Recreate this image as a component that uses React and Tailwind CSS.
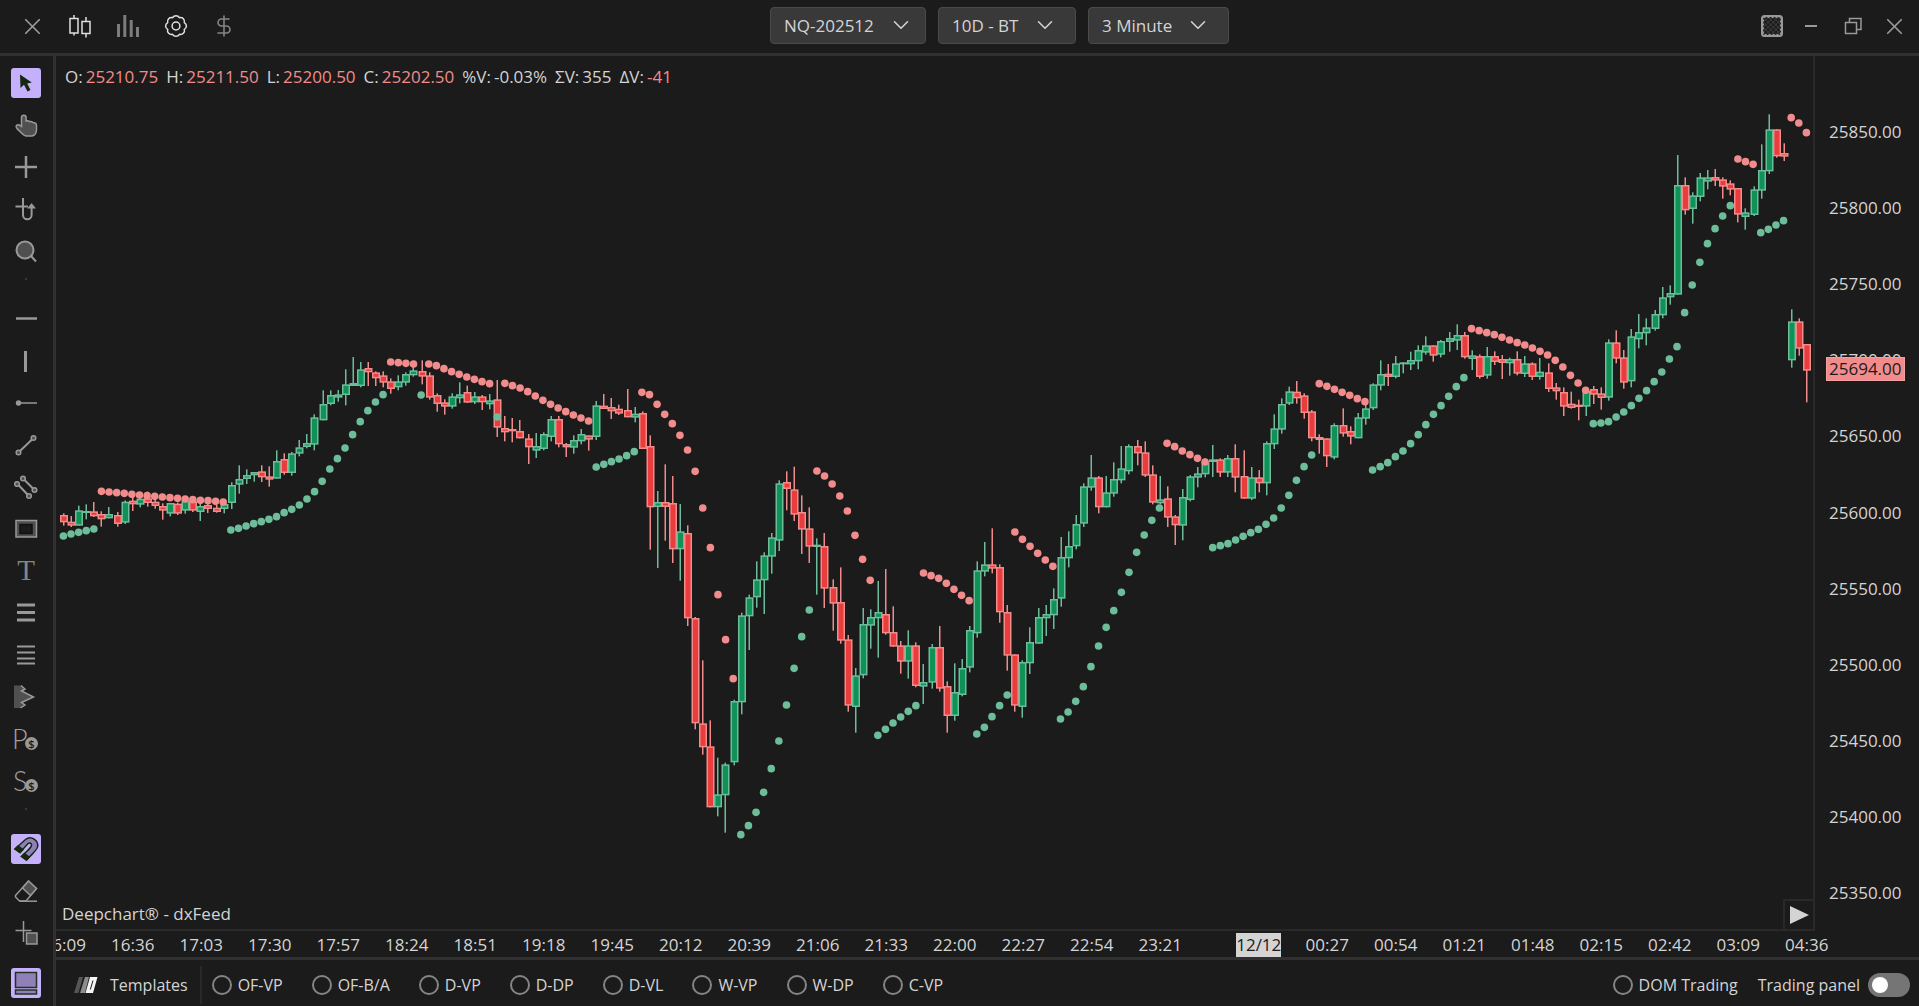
import React from "react";
import { ChevronDown, DollarSign, X } from "lucide-react";

/* ---------- price series ---------- */

// Each block: [baseline, rows]; a row is [direction, high, bodyTop, bodyBottom, low], in thirds of a unit below the baseline.
const CANDLE_BLOCKS = [
  [340, [
    ["D", 520, 525, 547, 557], ["D", 528, 545, 557, 561], ["U", 497, 511, 557, 557], ["U", 493, 513, 519, 538],
    ["D", 486, 514, 529, 531], ["D", 514, 522, 538, 560], ["U", 501, 522, 535, 535], ["D", 516, 525, 552, 560],
    ["U", 481, 485, 548, 552], ["D", 470, 482, 493, 513], ["U", 468, 476, 494, 502], ["D", 455, 475, 489, 500],
    ["D", 478, 485, 498, 506], ["D", 490, 498, 512, 539], ["U", 489, 489, 521, 529], ["D", 488, 491, 521, 525],
    ["U", 480, 482, 512, 521], ["D", 480, 484, 512, 516], ["U", 490, 498, 516, 543], ["D", 490, 495, 507, 519],
    ["D", 495, 503, 516, 518], ["U", 490, 492, 507, 520], ["U", 427, 435, 489, 507], ["U", 376, 417, 434, 461],
    ["U", 388, 405, 417, 432], ["U", 396, 396, 406, 425], ["D", 376, 394, 412, 426], ["D", 379, 409, 419, 440],
    ["U", 331, 363, 416, 416], ["D", 340, 357, 399, 404], ["U", 336, 340, 399, 407], ["U", 300, 322, 341, 349],
    ["U", 282, 309, 321, 325], ["U", 223, 232, 314, 331], ["U", 151, 192, 241, 241], ["U", 151, 165, 192, 196],
    ["U", 150, 163, 173, 185], ["U", 88, 133, 165, 196], ["U", 51, 129, 138, 138], ["U", 66, 88, 138, 142],
    ["D", 66, 84, 97, 138], ["D", 94, 97, 115, 138], ["D", 94, 106, 128, 142], ["D", 115, 124, 147, 161],
    ["U", 106, 124, 142, 151], ["U", 97, 102, 128, 137], ["U", 79, 91, 106, 110], ["D", 61, 93, 110, 133],
    ["D", 97, 106, 173, 179], ["D", 160, 165, 192, 215], ["D", 178, 187, 200, 224], ["U", 160, 169, 200, 206],
    ["U", 127, 163, 175, 190], ["D", 137, 156, 188, 188], ["U", 156, 169, 187, 192], ["D", 165, 169, 187, 210],
    ["U", 162, 181, 193, 208], ["D", 120, 178, 263, 291], ["D", 228, 264, 277, 304], ["D", 234, 267, 274, 307],
    ["D", 240, 273, 295, 295], ["D", 282, 295, 322, 372], ["U", 279, 318, 332, 354], ["U", 277, 282, 327, 331],
    ["U", 228, 237, 291, 304], ["D", 228, 237, 313, 322], ["D", 309, 312, 322, 351], ["U", 286, 300, 323, 341],
    ["U", 267, 282, 304, 313], ["D", 286, 286, 299, 332], ["U", 183, 196, 291, 300], ["D", 162, 197, 207, 207],
    ["D", 174, 201, 214, 237], ["D", 194, 206, 221, 225], ["D", 147, 210, 232, 232], ["U", 201, 221, 233, 247],
    ["D", 214, 219, 327, 327], ["D", 286, 318, 502, 629], ["U", 453, 486, 501, 684], ["D", 373, 486, 501, 602],
    ["D", 408, 489, 628, 669], ["U", 492, 574, 628, 722], ["D", 556, 579, 835, 858],
  ]],
  [500, [
    ["D", 351, 354, 670, 688], ["D", 481, 670, 742, 764], ["D", 661, 739, 922, 922], ["U", 773, 883, 922, 949],
    ["U", 788, 793, 886, 998], ["U", 599, 603, 787, 796], ["U", 338, 346, 607, 643], ["U", 284, 292, 349, 450],
    ["U", 184, 238, 292, 323], ["U", 157, 166, 241, 342], ["U", 99, 112, 170, 221], ["U", -59, -50, 122, 153],
    ["D", -86, -54, -33, 31], ["D", -100, -32, 44, 63],
  ]],
  [440, [
    ["D", 166, 216, 269, 342], ["D", 202, 265, 320, 369], ["U", 295, 314, 321, 464], ["D", 279, 318, 446, 504],
    ["D", 418, 441, 491, 572], ["D", 382, 486, 602, 611], ["D", 585, 598, 797, 815], ["U", 684, 706, 801, 878],
    ["U", 504, 552, 706, 715], ["U", 508, 531, 557, 626], ["U", 423, 516, 535, 653], ["D", 387, 522, 580, 584],
    ["D", 499, 576, 620, 620], ["D", 603, 616, 665, 701], ["U", 571, 616, 665, 716], ["D", 607, 616, 738, 742],
    ["U", 672, 726, 740, 792], ["U", 612, 621, 728, 746], ["D", 558, 621, 746, 755], ["D", 724, 738, 828, 878],
    ["U", 670, 756, 828, 842], ["U", 657, 684, 765, 769], ["U", 558, 570, 683, 697], ["U", 364, 391, 580, 593],
    ["U", 306, 373, 395, 409], ["D", 265, 373, 386, 400], ["D", 373, 381, 517, 548], ["D", 495, 516, 647, 692],
    ["D", 643, 643, 797, 815], ["U", 661, 666, 801, 833], ["U", 562, 606, 670, 702], ["U", 504, 531, 611, 611],
    ["U", 495, 522, 535, 588], ["U", 445, 477, 526, 567], ["U", 291, 351, 476, 500], ["U", 274, 318, 355, 382],
    ["U", 225, 252, 319, 328], ["U", 130, 139, 251, 261], ["U", 45, 112, 143, 152], ["D", 108, 112, 202, 220],
    ["U", 108, 157, 202, 202], ["U", 67, 117, 161, 170], ["U", 18, 85, 121, 130], ["U", 13, 18, 94, 103],
    ["D", 0, 18, 40, 76], ["D", 4, 37, 107, 111], ["D", 76, 103, 188, 193], ["U", 108, 178, 190, 193],
    ["D", 139, 175, 233, 261], ["D", 225, 229, 256, 315],
  ]],
  [400, [
    ["U", 267, 291, 377, 421], ["U", 225, 229, 300, 304], ["U", 201, 220, 233, 262], ["U", 175, 187, 223, 232],
    ["U", 135, 178, 186, 231], ["D", 175, 178, 218, 231], ["U", 165, 174, 218, 231], ["D", 133, 174, 233, 277],
    ["D", 151, 228, 296, 296], ["U", 201, 232, 296, 300], ["D", 210, 232, 250, 277], ["U", 124, 129, 250, 286],
    ["U", 43, 85, 133, 147], ["U", -5, 12, 89, 101], ["U", -40, -26, 11, 15], ["D", -57, -25, -5, 11],
    ["D", -20, -14, 39, 56], ["D", 30, 34, 115, 124], ["D", 103, 111, 120, 161], ["D", 115, 115, 169, 201],
    ["U", 70, 75, 173, 178], ["D", 25, 75, 101, 110], ["D", 79, 93, 110, 133], ["U", 39, 52, 115, 115],
    ["U", 15, 25, 56, 74], ["U", -50, -47, 25, 30],
  ]],
  [300, [
    ["U", 181, 222, 257, 271], ["D", 192, 221, 231, 258], ["U", 168, 190, 231, 235], ["U", 187, 187, 193, 220],
    ["U", 155, 180, 193, 210], ["U", 136, 150, 184, 208], ["U", 109, 136, 158, 164], ["D", 136, 136, 167, 185],
    ["U", 120, 123, 164, 172], ["U", 96, 114, 126, 155], ["U", 73, 105, 122, 150], ["D", 96, 105, 172, 176],
    ["U", 151, 166, 177, 210], ["D", 163, 168, 231, 236], ["U", 141, 168, 227, 236], ["D", 154, 168, 186, 195],
    ["D", 165, 177, 189, 237], ["U", 173, 177, 190, 227], ["D", 154, 177, 221, 226], ["U", 168, 190, 222, 231],
    ["D", 187, 190, 231, 240], ["U", 174, 215, 231, 239], ["D", 190, 217, 267, 276], ["D", 249, 262, 274, 299],
    ["D", 262, 276, 320, 348], ["D", 275, 311, 324, 326], ["D", 299, 314, 321, 361], ["U", 270, 273, 320, 348],
    ["D", 258, 267, 284, 312], ["D", 262, 280, 294, 329], ["U", 118, 127, 293, 302], ["D", 91, 127, 176, 190],
    ["D", 150, 172, 248, 266], ["U", 87, 109, 244, 262], ["U", 42, 96, 118, 145], ["U", 55, 82, 100, 136],
    ["U", 30, 42, 87, 92],
  ]],
  [0, [
    ["U", 861, 892, 946, 955], ["U", 856, 879, 892, 914], ["U", 465, 555, 884, 884], ["D", 532, 555, 631, 644],
    ["U", 577, 586, 627, 671], ["U", 519, 532, 591, 604], ["U", 510, 532, 545, 568], ["D", 507, 531, 542, 558],
    ["D", 532, 538, 560, 596], ["D", 541, 550, 569, 586], ["D", 564, 564, 644, 667], ["U", 625, 637, 651, 689],
    ["U", 559, 568, 645, 648], ["U", 433, 510, 572, 596], ["U", 343, 388, 514, 522], ["D", 388, 388, 469, 473],
    ["D", 430, 459, 470, 483], ["U", 928, 964, 1081, 1103], ["D", 955, 964, 1046, 1067], ["D", 1032, 1032, 1112, 1207],
  ]],
];

const CANDLES = CANDLE_BLOCKS.flatMap(([base, rows]) =>
  rows.map(([dir, ...ys]) => [dir, ...ys.map((y) => base + y / 3)])
);

// Trailing-stop dots: [direction, first candle, baseline, offsets in thirds].
const STOP_RUNS = [
  ["U", 0, 340, [588, 582, 577, 572, 567]],
  ["D", 5, 340, [454, 456, 458, 460, 463, 465, 467, 469, 471, 473, 475, 477, 479, 481, 482, 484, 486]],
  ["U", 22, 340, [570, 565, 558, 551, 545, 538, 530, 518, 508, 495, 477, 455, 424, 387, 356, 324, 284, 245, 212, 186, 164]],
  ["D", 43, 340, [66, 68, 70, 72]],
  ["U", 47, 340, [165]],
  ["D", 48, 340, [72, 77, 86, 95, 103, 111, 118, 125, 131]],
  ["U", 57, 340, [231]],
  ["D", 58, 340, [130, 137, 144, 155, 168, 181, 193, 204, 215, 225, 234, 243]],
  ["U", 70, 340, [381, 373, 365, 357, 347, 335]],
  ["D", 76, 340, [157, 164, 193, 223, 251, 286, 330, 394, 504, 623, 764, 899, 1016]],
  ["U", 89, 500, [1004, 977, 937, 877, 806, 723, 615, 505, 410, 330]],
  ["D", 99, 440, [93, 108, 132, 168, 213, 286, 358, 421]],
  ["U", 107, 440, [886, 868, 849, 831, 814, 797]],
  ["D", 113, 440, [399, 407, 415, 430, 448, 466, 482]],
  ["U", 120, 440, [882, 862, 830, 797, 765]],
  ["D", 125, 440, [276, 298, 319, 340, 360, 379]],
  ["U", 131, 440, [837, 816, 784, 740, 680, 618, 562, 512, 457, 397, 337, 285, 241, 204]],
  ["D", 145, 400, [130, 140, 153, 164, 175, 186]],
  ["U", 151, 400, [443, 437, 431, 420, 409, 398, 388, 373, 354, 324, 286, 241, 200, 165]],
  ["D", 165, 300, [251, 259, 268, 277, 286, 296, 305]],
  ["U", 172, 300, [510, 500, 488, 470, 453, 431, 404, 374, 343, 317, 289, 260, 233]],
  ["D", 185, 300, [86, 92, 98, 104, 112, 120, 128, 135, 144, 154, 165, 181, 201, 226, 249, 271]],
  ["U", 201, 300, [371, 369, 365, 351, 336, 317, 295, 272, 245, 216, 177, 140]],
  ["U", 213, 0, [938, 855, 787, 731, 686, 648, 617]],
  ["D", 220, 0, [477, 485, 493]],
  ["U", 223, 0, [698, 688, 675, 662]],
  ["D", 227, 0, [353, 369, 398]],
];

const EDGE = { U: "#6dbd9b", D: "#f28b8b" };
const BODY = { U: "#0f9158", D: "#e93c3c" };

const candleLeft = (i) => 1.5 * Math.floor(40.53 + 5.0743 * i);
const dotX = (i) => 63.4 + 7.6114 * i;

function PriceChart() {
  return (
    <svg
      className="block h-full w-full"
      viewBox="56 56 1757 873"
      preserveAspectRatio="none"
      role="img"
      aria-label="NQ-202512 three minute candles"
    >
      {CANDLES.map(([dir, high, top, bottom, low], i) => {
        const x = candleLeft(i);
        const inner = bottom - top - 3;
        return (
          <g key={i}>
            <rect x={x + 3} y={high} width="1.5" height={low - high} fill={EDGE[dir]} />
            <rect x={x} y={top} width="8" height={bottom - top} fill={EDGE[dir]} />
            {inner > 0 && <rect x={x + 1.5} y={top + 1.5} width="5" height={inner} fill={BODY[dir]} />}
          </g>
        );
      })}
      {STOP_RUNS.flatMap(([dir, start, base, ys]) =>
        ys.map((y, k) => (
          <circle key={`${start}-${k}`} cx={dotX(start + k)} cy={base + y / 3} r="3.8" fill={EDGE[dir]} />
        ))
      )}
    </svg>
  );
}

/* ---------- icons ---------- */

const G = "#999999";
const F = "#505050";
const INK = "#16290f";

function Icon({ children }) {
  return (
    <svg className="h-[30px] w-[30px] overflow-visible" viewBox="0 0 30 30" fill="none" stroke={G} strokeWidth="1.5" aria-hidden="true">
      {children}
    </svg>
  );
}

const CoinBadge = () => (
  <>
    <circle cx="20.500" cy="19.500" r="6.500" fill={G} stroke="none" />
    <text x="20.500" y="23.500" textAnchor="middle" fontSize="11" fontWeight="600" fill="#1b1b1b" stroke="none">$</text>
  </>
);

const TOOLS = [
  ["Select", <path d="M9 6.500L9.500 20L13 16.800L16.500 23.500L19.500 22L16.200 15.500L20.800 14.500Z" fill={INK} stroke="none" />, true],
  ["Pan", <path d="M10.500 15.500V7.500a2.300 2.300 0 0 1 4.600 0V11c1.500-.4 2.800 0 3.300.6c2-.3 3 .3 3.500 1c2 0 3.600 1 3.600 3v4c0 4-2 6-4.500 6.500h-6c-3-.5-5-4-9-7.500c-1.500-2-1-3.800 1-3.800c1.500 0 2.500 1 3.500 1.700z" fill={F} />],
  ["Crosshair", <path d="M15 4v22M4 15h22" strokeWidth="2.500" />],
  ["Tracking", <><path d="M12 4v17a4.300 4.300 0 0 0 8.600 0V14M4.500 12.500H17" strokeWidth="2" /><path d="M20.600 9L25 14.500H16.200Z" fill={G} stroke="none" /></>],
  ["Zoom", <><circle cx="14" cy="14" r="8.500" fill={F} strokeWidth="2" /><path d="M20 20L25 25.500" strokeWidth="2" /></>],
  null,
  ["Horizontal line", <path d="M5 14.500h21" strokeWidth="2.500" />],
  ["Vertical line", <path d="M14.500 5v21" strokeWidth="3" />],
  ["Ray", <><circle cx="7.500" cy="15" r="2.700" fill={G} stroke="none" /><path d="M8 15h18" strokeWidth="1.500" /></>],
  ["Trend line", <><path d="M9 21L21 9.500" strokeWidth="2" /><circle cx="22.500" cy="8" r="2.300" fill={F} /><circle cx="7.500" cy="22.500" r="2.300" fill={F} /></>],
  ["Channel", <><path d="M13 7.500L22.500 17M7.500 13L16.500 22.500" strokeWidth="2" /><circle cx="12" cy="6.500" r="2.300" fill={F} /><circle cx="23.500" cy="18" r="2.300" fill={F} /><circle cx="6" cy="12" r="2.300" fill={F} /><circle cx="18" cy="24" r="2.300" fill={F} /></>],
  ["Rectangle", <><rect x="5" y="6.500" width="20.500" height="16.500" fill={F} /><rect x="9" y="10.500" width="12" height="9" fill="#1b1b1b" stroke="#111111" /></>],
  ["Text", <text x="15" y="24" textAnchor="middle" fontSize="29" fill="#858585" stroke="none" className="font-['Liberation_Serif',serif]">T</text>],
  ["Levels", <path d="M6 7h18M6 14.500h18M6 22h18" strokeWidth="3" />],
  ["Fibonacci", <path d="M6 6.500h18M6 12.500h18M6 18.500h18M6 23.500h18" strokeWidth="2" />],
  ["Volume profile", <><path d="M3 3.500H10L14 7L10.500 9L22.500 15L10.500 20.500L14 23L9.500 26H3Z" fill={F} stroke="none" /><path d="M10 3.500L14 7L10.500 9L22.500 15L10.500 20.500L14 23L9.500 26" /></>],
  ["Position", <><text x="1" y="25" fontSize="27" fill="#a0a0a0" stroke="none" className="font-['Lato',sans-serif] font-light">P</text><CoinBadge /></>],
  ["Stop", <><text x="2" y="25" fontSize="27" fill="#a0a0a0" stroke="none" className="font-['Lato',sans-serif] font-light">S</text><CoinBadge /></>],
  null,
  ["Magnet", <g stroke={INK}><path d="M4 15L14.500 5.500C20 1 28 6.500 26.500 13C26 16 23 18 15.500 26L10.500 22.500C18 15 20 14 20.500 11.500C21 9 18.500 8.500 17 9.500L9 18.500Z" fill="#9080b8" /><path d="M4 15L7 12L12 15.500L9 18.500ZM10.500 22.500L13.500 19.500L18 23L15.500 26Z" fill={INK} /></g>, true],
  ["Eraser", <><path d="M4.500 19.500L17.500 5L25.500 12.500L15 25H8.500L4.500 21Z" /><path d="M11.500 12L17.500 5L25.500 12.500L19.500 19.500Z" fill={F} /><path d="M9 25.200H26" /></>],
  ["Add shape", <><path d="M12.500 3v21M4.500 12.500h16" /><rect x="15.500" y="15" width="10.500" height="11" fill={F} /></>],
];

const PANEL_ICON = (
  <g stroke="#22331f">
    <rect x="4.500" y="4.500" width="21" height="15" fill="#9080b8" />
    <rect x="4.500" y="22" width="21" height="4" fill="#9080b8" />
  </g>
);

function ToolButton({ label, active, children }) {
  return (
    <button
      type="button"
      aria-label={label}
      className={active ? "h-[30px] w-[30px] shrink-0 rounded-[3px] bg-[#c4b0fb]" : "h-[30px] w-[30px] shrink-0"}
    >
      <Icon>{children}</Icon>
    </button>
  );
}

const gearPath = (() => {
  const n = 8;
  const pts = Array.from({ length: n }, (_, k) => {
    const a = ((k + 0.5) * 2 * Math.PI) / n;
    return `${(15 + 9 * Math.cos(a)).toFixed(2)} ${(15 + 9 * Math.sin(a)).toFixed(2)}`;
  });
  return `M${pts[0]}` + [...pts.slice(1), pts[0]].map((p) => `A3.9 3.9 0 0 1 ${p}`).join("") + "Z";
})();

const HEADER_TOOLS = [
  ["Close tab", <X size={27} strokeWidth={1.5} color="#999999" />],
  ["Chart type", <Icon><g stroke="#e0e0e0"><path d="M9 4v3M9 22v2.500M21 6v4.500M21 22.500v4" /><rect x="5" y="7.500" width="8" height="14.500" /><rect x="17" y="10.500" width="8" height="12" /></g></Icon>],
  ["Indicators", <Icon><path d="M5.500 13v13M11.800 4v22M18.200 9v17M24.500 16v10" strokeWidth="3" stroke="#7c7c7c" /></Icon>],
  ["Settings", <Icon><g stroke="#e0e0e0" strokeLinejoin="round"><path d={gearPath} /><circle cx="15" cy="15" r="3.900" /></g></Icon>],
  ["Trading", <DollarSign size={24} strokeWidth={1.6} color="#858585" />],
];

const WINDOW_TOOLS = [
  ["Transparency", (
    <Icon>
      <defs>
        <pattern id="checker" width="5" height="5" patternUnits="userSpaceOnUse">
          <rect width="5" height="5" fill="#1b1b1b" stroke="none" />
          <path d="M0 0h2.500v2.500h-2.500zM2.500 2.500h2.500v2.500h-2.500z" fill="#363636" stroke="none" />
        </pattern>
      </defs>
      <rect x="5" y="5" width="20" height="20" rx="2.500" fill="url(#checker)" strokeWidth="2" />
      <rect x="6.500" y="6.500" width="17" height="17" strokeWidth="1" strokeDasharray="2 2" />
    </Icon>
  )],
  ["Minimize", <Icon><path d="M7 15h12" strokeWidth="2" /></Icon>],
  ["Restore", <Icon><path d="M6.500 11.500h11v11h-11zM10.500 11V7.500h11.500v11h-4" /></Icon>],
  ["Close", <X size={27} strokeWidth={1.5} color="#999999" />],
];

/* ---------- bars ---------- */

const SELECTS = [
  ["Instrument", "NQ-202512", "w-[156px]", "right-3"],
  ["Data range", "10D - BT", "w-[138px]", "right-[18px]"],
  ["Interval", "3 Minute", "w-[141px]", "right-[18px]"],
];

function Header() {
  return (
    <header className="flex h-14 shrink-0 items-start justify-between border-b-[3px] border-[#303030] pl-2 pr-1">
      <div className="flex h-[52px] items-center">
        {HEADER_TOOLS.map(([label, icon]) => (
          <button key={label} type="button" aria-label={label} className="flex w-12 justify-center">{icon}</button>
        ))}
      </div>
      <div className="flex h-[51px] items-center gap-3">
        {SELECTS.map(([label, value, width, chevron]) => (
          <div key={label} className={`relative ${width}`}>
            <select
              aria-label={label}
              defaultValue={value}
              className="block h-[37px] w-full appearance-none rounded-[4px] border border-[#4a4a4a] bg-[#393939] pl-[13px] text-[17px] leading-6 text-[#d4d4d4] outline-none"
            >
              <option>{value}</option>
            </select>
            <ChevronDown size={26} strokeWidth={1.4} className={`pointer-events-none absolute top-[5px] text-[#d4d4d4] ${chevron}`} />
          </div>
        ))}
      </div>
      <div className="flex h-[52px] items-center">
        {WINDOW_TOOLS.map(([label, icon]) => (
          <button key={label} type="button" aria-label={label} className="flex w-[41px] justify-center">{icon}</button>
        ))}
      </div>
    </header>
  );
}

function Sidebar() {
  return (
    <nav aria-label="Drawing tools" className="flex w-14 shrink-0 flex-col gap-3 border-r-[3px] border-[#303030] pb-2 pl-[11px] pt-3">
      {TOOLS.map((tool, i) =>
        tool ? (
          <ToolButton key={tool[0]} label={tool[0]} active={tool[2]}>{tool[1]}</ToolButton>
        ) : (
          <div key={i} className="flex h-[14px] w-[30px] shrink-0 justify-center"><div className="h-0.5 w-0.5 bg-[#3a3a3a]" /></div>
        )
      )}
      <div className="mt-auto flex">
        <ToolButton label="Bottom panel" active>{PANEL_ICON}</ToolButton>
      </div>
    </nav>
  );
}

const QUOTE = [
  ["O:", "25210.75", true], ["H:", "25211.50", true], ["L:", "25200.50", true], ["C:", "25202.50", true],
  ["%V:", "-0.03%", false], ["ΣV:", "355", false], ["ΔV:", "-41", true],
];

const PRICES = Array.from({ length: 11 }, (_, i) => `${25850 - i * 50}.00`);

const TIMES = [
  "16:09", "16:36", "17:03", "17:30", "17:57", "18:24", "18:51", "19:18", "19:45", "20:12", "20:39", "21:06",
  "21:33", "22:00", "22:27", "22:54", "23:21", "12/12", "00:27", "00:54", "01:21", "01:48", "02:15", "02:42",
  "03:09", "04:36",
];

function Chart() {
  return (
    <section className="flex min-h-0 flex-1">
      <div className="relative min-w-0 flex-1 border-b-2 border-r-2 border-[#292929]">
        <PriceChart />
        <dl className="absolute left-[9px] top-[9px] flex gap-2 leading-6">
          {QUOTE.map(([name, value, down]) => (
            <div key={name} className="flex gap-[3px]">
              <dt>{name}</dt>
              <dd className={down ? "text-[#f28b8b]" : ""}>{value}</dd>
            </div>
          ))}
        </dl>
        <p className="absolute bottom-[3px] left-1.5 leading-6">Deepchart® - dxFeed</p>
        <button
          type="button"
          aria-label="Jump to latest"
          className="absolute bottom-0 right-0 flex h-[30px] w-[30px] items-center justify-center border-l-2 border-t-2 border-[#292929]"
        >
          <svg className="h-[18px] w-[19px]" viewBox="0 0 19 18" aria-hidden="true"><path d="M0 0L19 9L0 18Z" fill="#d4d4d4" /></svg>
        </button>
      </div>
      <div className="relative w-[104px] shrink-0">
        <ol className="flex h-full flex-col pl-3.5 pt-[38px]">
          {PRICES.map((p) => (
            <li key={p} className="flex flex-1 items-center leading-6">{p}</li>
          ))}
        </ol>
        <div className="absolute left-[11px] top-[301px] border border-[#f5a0a0] bg-[#f28b8b] px-0.5 leading-[22px] text-[#1b1b1b]">25694.00</div>
      </div>
    </section>
  );
}

function TimeAxis() {
  return (
    <div className="h-[29px] shrink-0 overflow-hidden border-b-[3px] border-[#303030]">
      <ol className="-ml-[26px] mr-[78px] flex pt-0.5 leading-6">
        {TIMES.map((t) =>
          t.includes("/") ? (
            <li key={t} className="min-w-0 flex-[197]">
              <div className="pl-[30px] text-center">
                <span className="inline-block bg-[#d4d4d4] text-[#1b1b1b]">{t}</span>
              </div>
            </li>
          ) : (
            <li key={t} className="min-w-0 flex-[137] text-center">{t}</li>
          )
        )}
      </ol>
    </div>
  );
}

const TEMPLATES = ["OF-VP", "OF-B/A", "D-VP", "D-DP", "D-VL", "W-VP", "W-DP", "C-VP"];

function Choice({ name, label }) {
  return (
    <label className="flex items-center gap-1.5 whitespace-nowrap">
      <input type="radio" name={name} className="h-5 w-5 shrink-0 appearance-none rounded-full border-2 border-[#858585] checked:bg-[#c4b0fb]" />
      {label}
    </label>
  );
}

function Footer() {
  return (
    <footer className="flex h-[46px] shrink-0 items-center pl-[18px] pr-[9px] pt-1 text-[16px] leading-6">
      <button type="button" className="flex items-center gap-3">
        <svg className="h-4 w-6" viewBox="0 0 24 16" aria-hidden="true">
          <path d="M5 0h4L4.500 16H0Z" fill="#555555" />
          <path d="M11 0h4L11 16H6Z" fill="#8c8c8c" />
          <path d="M16 0h7.500L19 16H11.500ZM18.500 3.500L15.800 12.500h1L19.500 3.500Z" fill="#f5f5f5" fillRule="evenodd" />
        </svg>
        Templates
      </button>
      <div className="ml-3 mr-2.5 h-[38px] w-0.5 bg-[#292929]" />
      <div className="flex flex-1 gap-[29px]">
        {TEMPLATES.map((t) => <Choice key={t} name="template" label={t} />)}
      </div>
      <Choice name="dom" label="DOM Trading" />
      <label className="ml-5 flex items-center gap-2 whitespace-nowrap">
        Trading panel
        <input
          type="checkbox"
          role="switch"
          className="h-6 w-[42px] appearance-none rounded-full bg-[#757575] before:ml-1 before:mt-1 before:block before:h-4 before:w-4 before:rounded-full before:bg-white before:content-['']"
        />
      </label>
    </footer>
  );
}

export default function App() {
  return (
    <div className="flex h-screen flex-col overflow-hidden bg-[#1b1b1b] font-['Open_Sans',sans-serif] text-[17px] text-[#d4d4d4]">
      <Header />
      <div className="flex min-h-0 flex-1">
        <Sidebar />
        <main className="flex min-w-0 flex-1 flex-col">
          <Chart />
          <TimeAxis />
          <Footer />
        </main>
      </div>
    </div>
  );
}
